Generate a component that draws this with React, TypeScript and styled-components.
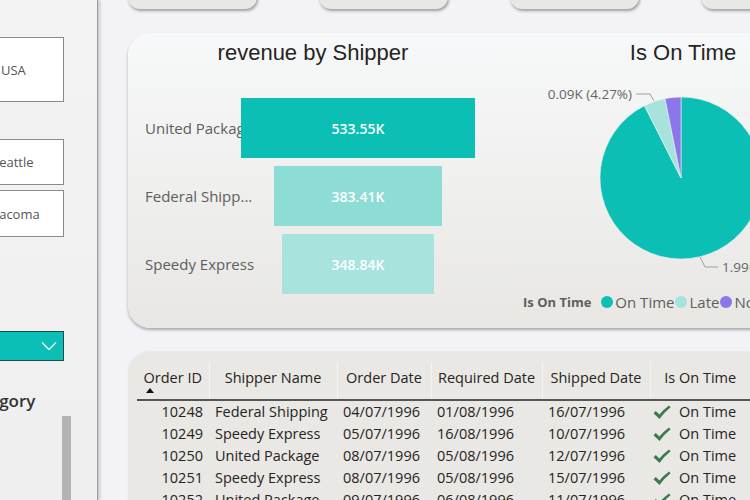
import React from 'react'
import styled, { createGlobalStyle } from 'styled-components'

const GlobalStyle = createGlobalStyle`
  *, *::before, *::after {
    box-sizing: border-box;
  }
  body {
    margin: 0;
    background: #f3f2f7;
    font-family: 'Open Sans', 'Noto Sans', sans-serif;
    overflow: hidden;
  }
`

const Page = styled.div`
  display: flex;
  width: 750px;
  height: 500px;
  overflow: hidden;
`

const FilterPane = styled.aside`
  width: 98px;
  flex-shrink: 0;
  background: linear-gradient(#f3f3f3, #efefef);
  border-right: 1px solid #9c9c9c;
  box-shadow: 2px 0 3px rgba(0, 0, 0, 0.18);
  overflow: hidden;
  position: relative;
  z-index: 1;
`

const PaneInner = styled.div`
  margin-left: -60px;
  width: 124px;
  padding-top: 37px;
  display: flex;
  flex-direction: column;
`

const SlicerBox = styled.div<{ $height: number, $indent: number, $gap: number }>`
  height: ${({ $height }) => $height}px;
  margin-top: ${({ $gap }) => $gap}px;
  background: #fff;
  border: 1px solid #8a8a8a;
  display: flex;
  align-items: center;
  padding-left: ${({ $indent }) => $indent}px;
  font-size: 13px;
  color: #555;
  white-space: nowrap;
`

const Dropdown = styled.div`
  margin-top: 94px;
  height: 30px;
  background: #0bbfb6;
  border: 1px solid #1f4d4a;
  display: flex;
  align-items: center;
  justify-content: flex-end;
  padding-right: 6px;
`

const PaneHeading = styled.div`
  margin-top: 29px;
  padding-left: 22px;
  font-size: 17px;
  font-weight: 600;
  line-height: 22px;
  color: #333;
  white-space: nowrap;
`

const ScrollThumb = styled.div`
  margin-top: 4px;
  margin-left: 122px;
  width: 9px;
  height: 120px;
  background: #b3b3b3;
`

const Main = styled.main`
  flex: 1;
  padding-left: 30px;
  display: flex;
  flex-direction: column;
  gap: 24px;
  margin-top: -51px;
  min-width: 0;
`

const TileRow = styled.div`
  display: flex;
  gap: 62px;
`

const Tile = styled.div`
  width: 129px;
  height: 60px;
  flex-shrink: 0;
  background: #e8e8e4;
  border-radius: 0 0 12px 12px;
  box-shadow: 1px 2px 3px rgba(0, 0, 0, 0.35);
`

const ChartCard = styled.section`
  width: 740px;
  height: 295px;
  flex-shrink: 0;
  border-radius: 22px;
  background: linear-gradient(#f7f8f9, #e8e7e4);
  box-shadow: 0 2px 3px rgba(0, 0, 0, 0.3);
  display: grid;
  grid-template-columns: 370px 370px;
`

const ChartPanel = styled.div`
  display: flex;
  flex-direction: column;
`

const ChartTitle = styled.h2`
  margin: 0;
  padding-top: 7px;
  font-family: 'Liberation Sans', Arial, sans-serif;
  font-weight: 400;
  font-size: 22px;
  line-height: 26px;
  color: #252423;
  text-align: center;
`

const Funnel = styled.div`
  margin-top: 32px;
  padding-left: 17px;
  display: flex;
  flex-direction: column;
  gap: 8px;
`

const FunnelRow = styled.div`
  display: grid;
  grid-template-columns: 96px 234px;
  align-items: center;
  height: 60px;
`

const FunnelLabel = styled.span`
  font-size: 15px;
  color: #605e5c;
  white-space: nowrap;
`

const FunnelBar = styled.div<{ $color: string }>`
  justify-self: center;
  height: 60px;
  background: ${({ $color }) => $color};
  color: #fff;
  font-size: 14px;
  font-weight: 600;
  display: flex;
  align-items: center;
  justify-content: center;
`

const PieSvg = styled.svg`
  display: block;
  width: 370px;
  height: 226px;
`

const Legend = styled.div`
  display: flex;
  align-items: center;
  padding-left: 25px;
  height: 20px;
  font-size: 15px;
  color: #605e5c;
  white-space: nowrap;
`

const LegendTitle = styled.span`
  font-size: 13px;
  font-weight: 700;
  margin-right: 10px;
`

const LegendItem = styled.span`
  display: flex;
  align-items: center;
  gap: 2px;
  margin-right: 1px;
`

const Dot = styled.span<{ $color: string }>`
  width: 12px;
  height: 12px;
  border-radius: 50%;
  background: ${({ $color }) => $color};
`

const TableCard = styled.section`
  width: 740px;
  height: 200px;
  flex-shrink: 0;
  border-radius: 22px 22px 0 0;
  background: #e9e8e4;
  box-shadow: 0 -1px 2px rgba(0, 0, 0, 0.05);
  padding: 10px 0 0 9px;
`

const Table = styled.table`
  border-collapse: collapse;
  table-layout: fixed;
  font-size: 14.5px;
  color: #252423;
`

const HeadCell = styled.th<{ $first?: boolean }>`
  height: 38px;
  padding: 0;
  vertical-align: top;
  font-weight: 400;
  text-align: center;
  white-space: nowrap;
  border-bottom: 2px solid #555;
  border-left: ${({ $first }) => ($first ? 'none' : '1px solid #f4f4f1')};
`

const HeadInner = styled.span`
  display: inline-flex;
  flex-direction: column;
  align-items: flex-start;
  padding-top: 6px;
  line-height: 20px;
`

const SortArrow = styled.span`
  margin-left: 2px;
  width: 0;
  height: 0;
  border-left: 4px solid transparent;
  border-right: 4px solid transparent;
  border-bottom: 5px solid #111;
`

const Row = styled.tr`
  height: 22px;
`

const Cell = styled.td<{ $align?: string }>`
  height: 22px;
  padding: 0 6px;
  line-height: 22px;
  white-space: nowrap;
  vertical-align: middle;
  text-align: ${({ $align }) => $align ?? 'left'};
`

const StatusCell = styled.div`
  display: flex;
  align-items: center;
  height: 22px;
  gap: 8px;
  margin-left: -3px;
`

const pie = [
  { name: 'On Time', from: 0, to: 333.2, color: '#0bbfb5' },
  { name: 'Late', from: 333.2, to: 348.6, color: '#a6e3dd' },
  { name: 'Not Shipped', from: 348.6, to: 360, color: '#8b77ea' }
]

const shippers = [
  { label: 'United Package', value: 533.55, color: '#0bbfb5' },
  { label: 'Federal Shipp...', value: 383.41, color: '#8ddcd5' },
  { label: 'Speedy Express', value: 348.84, color: '#a9e3dd' }
]

const orders = [
  ['10248', 'Federal Shipping', '04/07/1996', '01/08/1996', '16/07/1996'],
  ['10249', 'Speedy Express', '05/07/1996', '16/08/1996', '10/07/1996'],
  ['10250', 'United Package', '08/07/1996', '05/08/1996', '12/07/1996'],
  ['10251', 'Speedy Express', '08/07/1996', '05/08/1996', '15/07/1996'],
  ['10252', 'United Package', '09/07/1996', '06/08/1996', '11/07/1996']
]

const columns = [
  { title: 'Order ID', width: 72 },
  { title: 'Shipper Name', width: 128 },
  { title: 'Order Date', width: 94 },
  { title: 'Required Date', width: 111 },
  { title: 'Shipped Date', width: 108 },
  { title: 'Is On Time', width: 100 }
]

function slicePath (cx: number, cy: number, r: number, a0: number, a1: number): string {
  const pt = (a: number): string => {
    const rad = (a * Math.PI) / 180
    return `${(cx + r * Math.sin(rad)).toFixed(2)} ${(cy - r * Math.cos(rad)).toFixed(2)}`
  }
  const large = a1 - a0 > 180 ? 1 : 0
  return `M${cx} ${cy} L${pt(a0)} A${r} ${r} 0 ${large} 1 ${pt(a1)} Z`
}

function Chevron (): React.ReactElement {
  return (
    <svg width='16' height='10' viewBox='0 0 16 10'>
      <polyline points='1,1.5 8,8.5 15,1.5' fill='none' stroke='#e8fffd' strokeWidth='1.4' />
    </svg>
  )
}

function Check (): React.ReactElement {
  return (
    <svg width='18' height='15' viewBox='0 0 18 15'>
      <path d='M0.5 8.2 L2.8 5.9 L6.4 9.4 Q11 4 16 0.4 L17.6 2.2 Q11.5 7 6.5 14 Z' fill='#3d7a4e' />
    </svg>
  )
}

function ShipperFunnel (): React.ReactElement {
  const max = shippers[0].value
  return (
    <Funnel>
      {shippers.map((s) => (
        <FunnelRow key={s.label}>
          <FunnelLabel>{s.label}</FunnelLabel>
          <FunnelBar $color={s.color} style={{ width: (s.value / max) * 234 }}>
            {s.value.toFixed(2)}K
          </FunnelBar>
        </FunnelRow>
      ))}
    </Funnel>
  )
}

function OnTimePie (): React.ReactElement {
  return (
    <PieSvg viewBox='0 0 370 226'>
      {pie.map((p) => (
        <path key={p.name} d={slicePath(183, 112, 81, p.from, p.to)} fill={p.color} stroke='#f2f2f0' strokeWidth='0.6' />
      ))}
      <polyline points='138,28 152,28 156,35' fill='none' stroke='#a0a0a0' strokeWidth='1' />
      <text x='134' y='33' textAnchor='end' fontSize='13.5' fill='#666' fontFamily='Open Sans, sans-serif'>0.09K (4.27%)</text>
      <polyline points='202,191 207,201 220,201' fill='none' stroke='#a0a0a0' strokeWidth='1' />
      <text x='224' y='206' fontSize='13.5' fill='#666' fontFamily='Open Sans, sans-serif'>1.99K (92.5%)</text>
    </PieSvg>
  )
}

function OrdersTable (): React.ReactElement {
  return (
    <Table>
      <colgroup>
        {columns.map((c) => <col key={c.title} style={{ width: c.width }} />)}
      </colgroup>
      <thead>
        <tr>
          {columns.map((c, i) => (
            <HeadCell key={c.title} $first={i === 0}>
              <HeadInner>
                {c.title}
                {i === 0 ? <SortArrow /> : null}
              </HeadInner>
            </HeadCell>
          ))}
        </tr>
      </thead>
      <tbody>
        {orders.map((o) => (
          <Row key={o[0]}>
            <Cell $align='right'>{o[0]}</Cell>
            <Cell>{o[1]}</Cell>
            <Cell>{o[2]}</Cell>
            <Cell>{o[3]}</Cell>
            <Cell>{o[4]}</Cell>
            <Cell><StatusCell><Check />On Time</StatusCell></Cell>
          </Row>
        ))}
      </tbody>
    </Table>
  )
}

export default function App (): React.ReactElement {
  return (
    <>
      <GlobalStyle />
      <Page>
        <FilterPane>
          <PaneInner>
            <SlicerBox $height={65} $indent={60} $gap={0}>USA</SlicerBox>
            <SlicerBox $height={46} $indent={51} $gap={37}>Seattle</SlicerBox>
            <SlicerBox $height={47} $indent={51} $gap={5}>Tacoma</SlicerBox>
            <Dropdown><Chevron /></Dropdown>
            <PaneHeading>Category</PaneHeading>
            <ScrollThumb />
          </PaneInner>
        </FilterPane>
        <Main>
          <TileRow>
            <Tile />
            <Tile />
            <Tile />
            <Tile />
          </TileRow>
          <ChartCard>
            <ChartPanel>
              <ChartTitle>revenue by Shipper</ChartTitle>
              <ShipperFunnel />
            </ChartPanel>
            <ChartPanel>
              <ChartTitle>Is On Time</ChartTitle>
              <OnTimePie />
              <Legend>
                <LegendTitle>Is On Time</LegendTitle>
                {pie.map((p) => (
                  <LegendItem key={p.name}><Dot $color={p.color} />{p.name}</LegendItem>
                ))}
              </Legend>
            </ChartPanel>
          </ChartCard>
          <TableCard>
            <OrdersTable />
          </TableCard>
        </Main>
      </Page>
    </>
  )
}
